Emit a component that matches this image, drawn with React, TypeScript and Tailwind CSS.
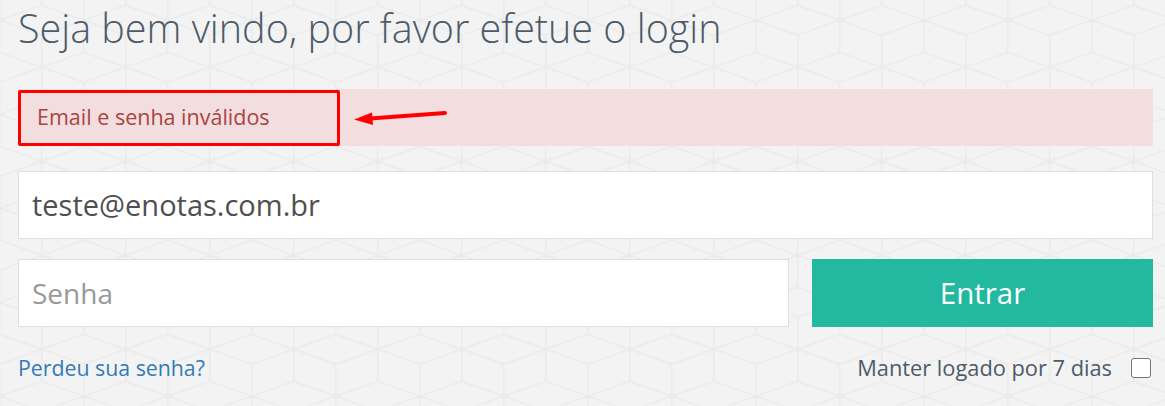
import React from "react";

const A = 42;
const S = 15;
const L = 32;

// tumbling-blocks background, one tile = 84 x 94
function cubeLines(c: number, y0: number) {
  return [
    `M${c} ${y0}L${c - A} ${y0 + S}L${c} ${y0 + 2 * S}L${c + A} ${y0 + S}Z`,
    `M${c} ${y0 + 2 * S}V${y0 + 2 * S + L}`,
    `M${c - A} ${y0 + S}V${y0 + S + L}`,
    `M${c + A} ${y0 + S}V${y0 + S + L}`,
  ].join("");
}

const cubes: [number, number][] = [
  [0, -94], [84, -94], [42, -47], [-42, -47], [126, -47],
  [0, 0], [84, 0], [42, 47], [-42, 47], [126, 47], [0, 94], [84, 94],
];

function Backdrop() {
  return (
    <svg className="pointer-events-none absolute inset-0 h-full w-full" aria-hidden>
      <defs>
        <pattern id="blocks" x="251.7" y="334.3" width="84" height="94" patternUnits="userSpaceOnUse">
          <path d={cubes.map(([c, y]) => cubeLines(c, y)).join("")} fill="none" stroke="#eaeaea" strokeWidth="1.5" />
        </pattern>
      </defs>
      <rect width="100%" height="100%" fill="url(#blocks)" />
    </svg>
  );
}

export default function App() {
  return (
    <div
      className="relative h-[406px] w-full overflow-hidden bg-[#f3f3f3]"
      style={{ fontFamily: '"Open Sans", "Liberation Sans", sans-serif' }}
    >
      <Backdrop />
      <div className="relative pl-[18px] pr-[12px] pt-[8px]">
        <h1 className="text-[39.5px] font-light leading-[40px] text-[#4d5b69]">
          Seja bem vindo, por favor efetue o login
        </h1>

        {/* alerta de erro */}
        <div className="relative mt-[41px] flex h-[57px] items-center bg-[#f2dede] pl-[19px]">
          <span className="text-[21.5px] text-[#a94442]">Email e senha inválidos</span>
          <div className="absolute left-0 top-[1px] h-[56px] w-[322px] rounded-[2px] border-[3px] border-[#ff0000]" />
          <svg className="absolute left-[332px] top-[14px]" width="100" height="24" viewBox="0 0 100 24">
            <path d="M95 10 L20 15.5" stroke="#ff0000" strokeWidth="4" strokeLinecap="round" />
            <path d="M4 16.5 L22 9.5 L23 22 Z" fill="#ff0000" />
          </svg>
        </div>

        <div className="mt-[25px] flex h-[68px] items-center border border-[#dbe1e1] bg-white px-[13px]">
          <span className="text-[29px] text-[#4f4f4f]">teste@enotas.com.br</span>
        </div>

        <div className="mt-[20px] flex gap-[23px]">
          <div className="flex h-[68px] flex-1 items-center border border-[#dbe1e1] bg-white px-[13px]">
            <span className="text-[28px] text-[#999999]">Senha</span>
          </div>
          <button className="flex h-[68px] w-[341px] items-center justify-center bg-[#22b9a0] text-[29.5px] text-white">
            Entrar
          </button>
        </div>

        <div className="mt-[29px] flex h-[24px] items-center justify-between">
          <a className="text-[21.3px] text-[#337ab7]">Perdeu sua senha?</a>
          <label className="flex items-center gap-[19px] pr-[2px]">
            <span className="text-[21.8px] text-[#4d5b69]">Manter logado por 7 dias</span>
            <span className="block h-[20px] w-[20px] rounded-[3px] border border-[#767676] bg-white" />
          </label>
        </div>
      </div>
    </div>
  );
}
